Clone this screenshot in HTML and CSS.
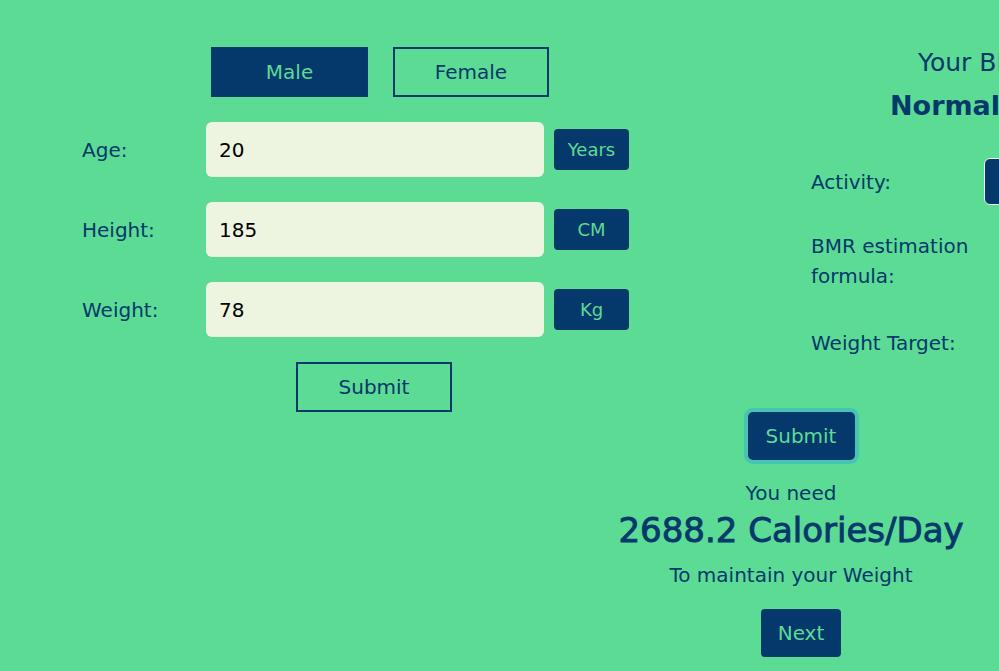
FILE: index.html
```html
<!DOCTYPE html>
<html lang="en">
<head>
<meta charset="utf-8">
<title>Calorie Calculator</title>
<link rel="stylesheet" href="styles.css">
</head>
<body>
<div class="app">
  <section class="left">
    <div class="gender">
      <button class="gbtn male">Male</button>
      <button class="gbtn female">Female</button>
    </div>
    <div class="form">
      <div class="row">
        <span class="label">Age:</span>
        <input class="field" type="text" value="20">
        <span class="unit">Years</span>
      </div>
      <div class="row">
        <span class="label">Height:</span>
        <input class="field" type="text" value="185">
        <span class="unit">CM</span>
      </div>
      <div class="row">
        <span class="label">Weight:</span>
        <input class="field" type="text" value="78">
        <span class="unit">Kg</span>
      </div>
    </div>
    <button class="outline-submit">Submit</button>
  </section>

  <section class="right">
    <div class="bmi">
      <div class="bmi-title">Your BMI is 22.8</div>
      <div class="bmi-value">Normal weight</div>
    </div>
    <div class="rform">
      <div class="rrow">
        <span class="rlabel">Activity:</span>
        <div class="select">Sedentary</div>
      </div>
      <div class="rrow">
        <span class="rlabel">BMR estimation formula:</span>
      </div>
      <div class="rrow last">
        <span class="rlabel">Weight Target:</span>
      </div>
    </div>
    <div class="result">
      <button class="solid-btn submit-focus">Submit</button>
      <div class="need">You need</div>
      <div class="cal">2688.2 Calories/Day</div>
      <div class="maintain">To maintain your Weight</div>
      <button class="solid-btn next">Next</button>
    </div>
  </section>
</div>
</body>
</html>
```

FILE: styles.css
```css
html, body {
  margin: 0;
  padding: 0;
}
body {
  width: 999px;
  height: 671px;
  overflow: hidden;
  background: #5cdb95;
  color: #05386b;
  font-family: "DejaVu Sans", sans-serif;
  font-size: 20px;
}
button {
  font-family: inherit;
  cursor: pointer;
}
.app {
  display: flex;
  align-items: flex-start;
}
.left {
  flex: none;
  width: 583px;
  padding-top: 47px;
}
.gender {
  display: flex;
  gap: 25px;
  padding-left: 211px;
}
.gbtn {
  height: 50px;
  font-size: 20px;
  padding: 0;
}
.male {
  width: 157px;
  background: #05386b;
  color: #5cdb95;
  border: none;
}
.female {
  width: 156px;
  background: transparent;
  color: #05386b;
  border: 2px solid #05386b;
}
.form {
  margin-top: 25px;
  padding-left: 82px;
  display: flex;
  flex-direction: column;
  gap: 25px;
}
.row {
  display: flex;
  align-items: center;
  height: 55px;
}
.label {
  width: 124px;
  flex: none;
}
.field {
  flex: none;
  width: 338px;
  height: 55px;
  box-sizing: border-box;
  border: none;
  border-radius: 6px;
  background: #edf5e1;
  padding: 0 13px;
  font-family: inherit;
  font-size: 20px;
  color: #000;
  outline: none;
}
.unit {
  flex: none;
  margin-left: 10px;
  width: 75px;
  height: 41px;
  border-radius: 4px;
  background: #05386b;
  color: #5cdb95;
  font-size: 18px;
  display: flex;
  align-items: center;
  justify-content: center;
}
.outline-submit {
  display: block;
  margin: 25px 0 0 296px;
  width: 156px;
  height: 50px;
  background: transparent;
  border: 2px solid #05386b;
  color: #05386b;
  font-size: 20px;
  padding: 0;
}
.right {
  flex: none;
  width: 416px;
}
.bmi {
  padding-top: 48px;
  padding-left: 335px;
  white-space: nowrap;
}
.bmi-title {
  font-size: 25px;
  line-height: 30px;
}
.bmi-value {
  margin-top: 10px;
  margin-left: -28px;
  font-size: 27px;
  line-height: 36px;
  font-weight: bold;
}
.rform {
  margin-top: 34px;
  padding-left: 228px;
  display: flex;
  flex-direction: column;
  gap: 26px;
}
.rrow {
  display: flex;
  align-items: center;
  min-height: 47px;
}
.rrow.last {
  margin-top: 2px;
}
.rlabel {
  flex: none;
  width: 173px;
  line-height: 30px;
}
.select {
  flex: none;
  width: 200px;
  height: 47px;
  box-sizing: border-box;
  border: 1px solid #edf5e1;
  border-radius: 6px;
  background: #05386b;
  color: #5cdb95;
  padding: 0 14px;
  display: flex;
  align-items: center;
}
.result {
  display: flex;
  flex-direction: column;
  align-items: center;
  text-align: center;
}
.solid-btn {
  background: #05386b;
  color: #5cdb95;
  border: none;
  font-size: 20px;
  padding: 0;
  margin-left: 20px;
}
.submit-focus {
  margin-top: 46px;
  width: 107px;
  height: 48px;
  border-radius: 5px;
  box-shadow: 0 0 0 4px #47c4b3;
}
.need {
  margin-top: 21px;
  line-height: 24px;
}
.cal {
  margin-top: 5px;
  font-size: 34px;
  line-height: 40px;
  -webkit-text-stroke: 0.9px #05386b;
  white-space: nowrap;
}
.maintain {
  margin-top: 13px;
  line-height: 24px;
}
.next {
  margin-top: 22px;
  width: 80px;
  height: 48px;
  border-radius: 4px;
}
```
